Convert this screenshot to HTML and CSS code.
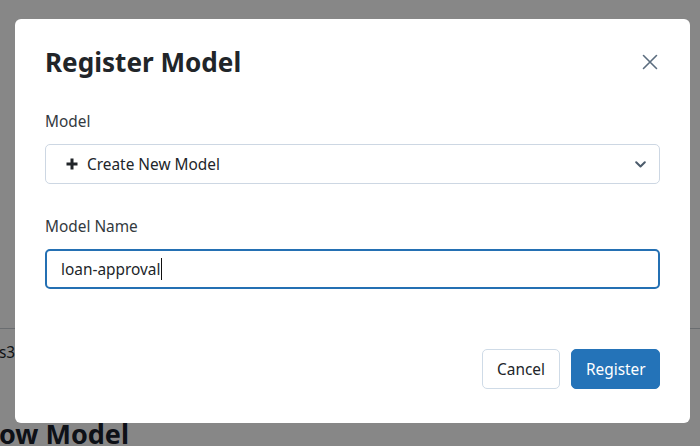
FILE: index.html
```html
<!DOCTYPE html>
<html lang="en">
<head>
<meta charset="utf-8">
<title>Register Model</title>
<link rel="stylesheet" href="styles.css">
</head>
<body>
<div class="page">
  <div class="page-top"></div>
  <div class="page-meta">s3</div>
  <h2 class="page-title">ow Model</h2>
</div>
<div class="backdrop"></div>
<div class="modal" role="dialog" aria-labelledby="modal-title">
  <div class="modal-header">
    <h1 class="modal-title" id="modal-title">Register Model</h1>
    <button class="close" aria-label="Close">
      <svg width="16" height="16" viewBox="0 0 16 16"><path d="M1.5 1.5 L14.5 14.5 M14.5 1.5 L1.5 14.5" stroke="#5b6d7f" stroke-width="1.6" stroke-linecap="round" fill="none"/></svg>
    </button>
  </div>
  <div class="field">
    <label class="label">Model</label>
    <div class="select">
      <svg class="plus" width="14" height="14" viewBox="0 0 14 14"><path d="M7 1.5 V12.5 M1.5 7 H12.5" stroke="#212529" stroke-width="3" fill="none"/></svg>
      <span class="select-text">Create New Model</span>
      <svg class="chev" width="11" height="7" viewBox="0 0 11 7"><path d="M1.2 1.2 L5.5 5.5 L9.8 1.2" stroke="#4b5b6b" stroke-width="2" fill="none" stroke-linecap="round" stroke-linejoin="round"/></svg>
    </div>
  </div>
  <div class="field field-name">
    <label class="label">Model Name</label>
    <div class="input"><span>loan-approval</span><span class="caret"></span></div>
  </div>
  <div class="modal-footer">
    <button class="btn btn-cancel">Cancel</button>
    <button class="btn btn-primary">Register</button>
  </div>
</div>
</body>
</html>
```

FILE: styles.css
```css
html, body {
  margin: 0;
  padding: 0;
  height: 100%;
  overflow: hidden;
}
body {
  background: #ffffff;
  font-family: "Noto Sans", "DejaVu Sans", sans-serif;
  color: #212529;
}
.page {
  display: flex;
  flex-direction: column;
}
.page-top {
  height: 328px;
  border-bottom: 1px solid #c9ced4;
}
.page-meta {
  font-size: 15.4px;
  color: #212529;
  margin-top: 13px;
  margin-left: -1px;
  line-height: 22px;
}
.page-title {
  margin: 53px 0 0 -1px;
  font-size: 27px;
  font-weight: 700;
  color: #1a202c;
  line-height: 34px;
}
.backdrop {
  position: fixed;
  inset: 0;
  background: rgba(0, 0, 0, 0.47);
}
.modal {
  position: fixed;
  left: 15px;
  top: 19px;
  width: 675px;
  height: 404px;
  box-sizing: border-box;
  background: #ffffff;
  border-radius: 6px;
  padding: 26px 30px 34px 30px;
  display: flex;
  flex-direction: column;
}
.modal-header {
  display: flex;
  align-items: center;
  justify-content: space-between;
}
.modal-title {
  margin: 0;
  font-size: 26.1px;
  font-weight: 700;
  line-height: 34px;
  color: #212529;
}
.close {
  border: 0;
  background: transparent;
  padding: 0;
  margin-right: 2px;
  width: 16px;
  height: 16px;
  display: flex;
}
.field {
  display: flex;
  flex-direction: column;
}
.label {
  font-size: 15.4px;
  line-height: 22px;
  color: #333a40;
  margin-top: 32px;
  margin-bottom: 11px;
}
.select {
  height: 40px;
  box-sizing: border-box;
  border: 1px solid #cdd7e3;
  border-radius: 5px;
  display: flex;
  align-items: center;
  padding: 0 13px 0 19px;
}
.plus {
  margin-right: 8px;
}
.select-text {
  font-size: 15.4px;
  color: #212529;
  flex: 1;
}
.input {
  height: 40px;
  box-sizing: border-box;
  border: 2px solid #2470b3;
  border-radius: 5px;
  display: flex;
  align-items: center;
  padding: 0 14px;
  font-size: 15.4px;
  color: #212529;
}
.caret {
  width: 1px;
  height: 22px;
  background: #111;
  margin-left: 1px;
}
.modal-footer {
  margin-top: auto;
  display: flex;
  justify-content: flex-end;
  gap: 11px;
}
.btn {
  height: 40px;
  box-sizing: border-box;
  border-radius: 5px;
  font-family: "Noto Sans", "DejaVu Sans", sans-serif;
  font-size: 15.4px;
  padding: 0 14px;
}
.btn-cancel {
  background: #ffffff;
  border: 1px solid #cfdbe7;
  color: #212529;
  width: 78px;
}
.btn-primary {
  background: #2473b8;
  border: 1px solid #2473b8;
  color: #ffffff;
  width: 89px;
}
```
